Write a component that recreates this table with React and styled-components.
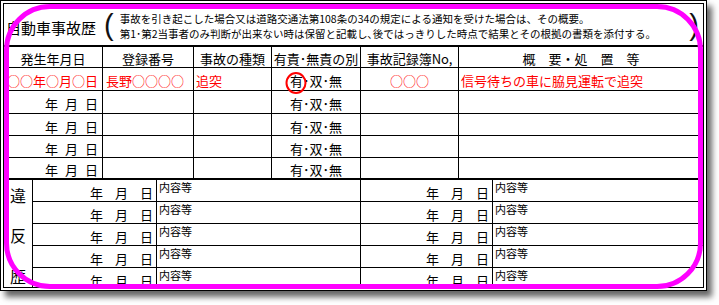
import React from 'react';
import styled, { createGlobalStyle } from 'styled-components';

const GlobalStyle = createGlobalStyle`
  html, body {
    margin: 0;
    padding: 0;
    background: #fff;
  }
  body {
    font-family: "Noto Sans CJK JP", "Noto Sans", sans-serif;
    color: #000;
  }
`;

const RED = '#ff0000';
const MAGENTA = '#ff00ff';
const topCols = '99px 91px 78px 89px 98px 1fr';
const lowCols = '29px 124px 204px 132px 1fr';

const Page = styled.div`
  width: 719px;
  height: 305px;
  overflow: hidden;
  background: #fff;
`;

const Frame = styled.div`
  position: relative;
  width: 707px;
  height: 291px;
  box-sizing: border-box;
  border: 4px double #000;
  background: #fff;
  box-shadow: 5px 6px 6px rgba(0, 0, 0, 0.6);
`;

const Sheet = styled.div`
  width: 699px;
  height: 283px;
  overflow: hidden;
  display: flex;
  flex-direction: column;
`;

// magenta marker drawn over the sheet
const Highlight = styled.div`
  position: absolute;
  left: 0;
  top: 0;
  width: 699px;
  height: 285px;
  box-sizing: border-box;
  border: 5px solid ${MAGENTA};
  border-radius: 46px;
  pointer-events: none;
`;

const TitleRow = styled.div`
  flex: 0 0 43px;
  box-sizing: border-box;
  border-bottom: 2px solid #000;
  display: flex;
  align-items: center;
`;

const Title = styled.div`
  font-size: 15px;
  line-height: 15px;
  padding: 6px 0 0 2px;
  white-space: nowrap;
`;

const Paren = styled.span`
  font-family: "Liberation Sans", Arial, sans-serif;
  font-size: 29px;
  line-height: 29px;
  color: #111;
  margin: ${p => (p.$right ? '0 4px 0 0' : '0 0 0 8px')};
  padding-top: 2px;
`;

const Notes = styled.div`
  flex: 1;
  font-size: 10.5px;
  line-height: 15px;
  padding: 3px 0 0 6px;
  white-space: nowrap;
`;

const Row = styled.div`
  flex: 0 0 ${p => p.$h}px;
  box-sizing: border-box;
  display: grid;
  grid-template-columns: ${topCols};
  border-bottom: ${p => (p.$thick ? 2 : 1)}px solid #000;
`;

const Cell = styled.div`
  box-sizing: border-box;
  border-right: 1px solid #000;
  display: flex;
  align-items: center;
  justify-content: ${p => p.$align || 'center'};
  padding: 3px ${p => p.$pr || 0}px 0 ${p => p.$pl || 0}px;
  font-size: 13px;
  line-height: 13px;
  white-space: nowrap;
  color: ${p => (p.$red ? RED : '#000')};
  &:last-child {
    border-right: none;
  }
`;

const DateText = styled.span`
  display: flex;
  gap: ${p => p.$gap}px;
`;

const FaultText = styled.span`
  color: #000;
`;

// red ring marking the chosen answer
const Circled = styled.span`
  position: relative;
  &::after {
    content: '';
    position: absolute;
    left: 50%;
    top: 50%;
    width: 21px;
    height: 22px;
    box-sizing: border-box;
    border: 2px solid ${RED};
    border-radius: 50%;
    transform: translate(-50%, calc(-50% + 2px));
  }
`;

const Lower = styled.div`
  flex: 0 0 auto;
  display: grid;
  grid-template-columns: ${lowCols};
  grid-template-rows: repeat(5, 22px);
`;

const SideLabel = styled.div`
  grid-row: 1 / -1;
  border-right: 1px solid #000;
  display: flex;
  flex-direction: column;
  align-items: center;
  justify-content: center;
  gap: 24.5px;
  font-size: 16px;
  line-height: 16px;
`;

const LowCell = styled.div`
  box-sizing: border-box;
  border-right: ${p => (p.$last ? 'none' : '1px solid #000')};
  border-bottom: 1px solid #000;
  display: flex;
  align-items: ${p => (p.$top ? 'flex-start' : 'center')};
  justify-content: ${p => (p.$top ? 'flex-start' : 'flex-end')};
  padding: ${p => (p.$top ? '2px 0 0 2px' : '3px 3px 0 0')};
  font-size: ${p => (p.$top ? 11 : 13)}px;
  line-height: ${p => (p.$top ? 11 : 13)}px;
  white-space: nowrap;
`;

const Ymd = ({ gap }) => (
  <DateText $gap={gap}>
    <span>年</span>
    <span>月</span>
    <span>日</span>
  </DateText>
);

const Fault = ({ circled }) => (
  <FaultText>
    {circled ? <Circled>有</Circled> : '有'}･双･無
  </FaultText>
);

const accidents = [
  {
    h: 23,
    date: '○○年○月○日',
    number: '長野○○○○',
    kind: '追突',
    record: '○○○',
    summary: '信号待ちの車に脇見運転で追突',
    circled: true,
  },
  { h: 23 },
  { h: 22 },
  { h: 22 },
  { h: 22, thick: true },
];

export default function App() {
  return (
    <Page>
      <GlobalStyle />
      <Frame>
        <Sheet>
          <TitleRow>
            <Title>自動車事故歴</Title>
            <Paren>(</Paren>
            <Notes>
              <div>事故を引き起こした場合又は道路交通法第108条の34の規定による通知を受けた場合は、その概要。</div>
              <div>第1･第2当事者のみ判断が出来ない時は保留と記載し､後ではっきりした時点で結果とその根拠の書類を添付する。</div>
            </Notes>
            <Paren $right>)</Paren>
          </TitleRow>

          <Row $h={21}>
            <Cell>発生年月日</Cell>
            <Cell>登録番号</Cell>
            <Cell>事故の種類</Cell>
            <Cell>有責･無責の別</Cell>
            <Cell>事故記録簿No,</Cell>
            <Cell>概　要・処　置　等</Cell>
          </Row>

          {accidents.map((a, i) => (
            <Row key={i} $h={a.h} $thick={a.thick}>
              <Cell $align="flex-end" $pr={4} $red={!!a.date}>
                {a.date || <Ymd gap={7} />}
              </Cell>
              <Cell $align="flex-start" $pl={3} $red>
                {a.number}
              </Cell>
              <Cell $align="flex-start" $pl={2} $red>
                {a.kind}
              </Cell>
              <Cell>
                <Fault circled={a.circled} />
              </Cell>
              <Cell $red>{a.record}</Cell>
              <Cell $align="flex-start" $pl={2} $red>
                {a.summary}
              </Cell>
            </Row>
          ))}

          <Lower>
            <SideLabel>
              <span>違</span>
              <span>反</span>
              <span>歴</span>
            </SideLabel>
            {[0, 1, 2, 3, 4].map(i => (
              <React.Fragment key={i}>
                <LowCell>
                  <Ymd gap={12} />
                </LowCell>
                <LowCell $top>内容等</LowCell>
                <LowCell>
                  <Ymd gap={12} />
                </LowCell>
                <LowCell $top $last>
                  内容等
                </LowCell>
              </React.Fragment>
            ))}
          </Lower>
        </Sheet>
        <Highlight />
      </Frame>
    </Page>
  );
}
